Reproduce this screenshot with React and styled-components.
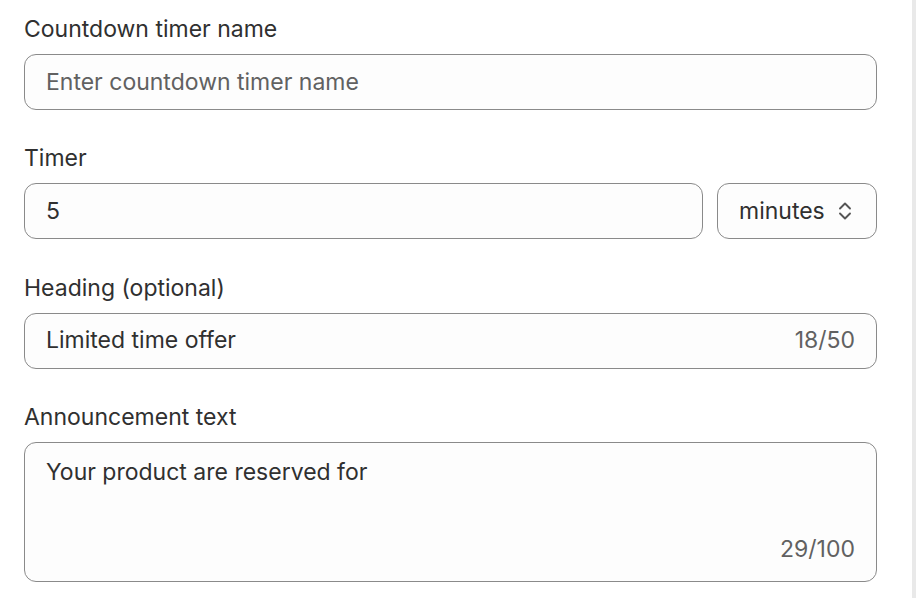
import React from 'react';
import styled, { createGlobalStyle } from 'styled-components';

const Global = createGlobalStyle`
  html, body {
    margin: 0;
    padding: 0;
    background: #ffffff;
  }
  body {
    font-family: Inter, "Noto Sans", sans-serif;
    color: #303030;
  }
`;

const Layout = styled.div`
  display: flex;
  height: 598px;
  overflow: hidden;
`;

const Panel = styled.div`
  flex: 1;
  display: flex;
  flex-direction: column;
  gap: 34.4px;
  padding: 15px 35px 0 24px;
`;

const Gutter = styled.div`
  width: 4px;
  background: #e9e9e9;
`;

const Field = styled.div`
  display: flex;
  flex-direction: column;
  gap: 10px;
  flex-shrink: 0;
`;

const Label = styled.label`
  font-size: 23px;
  line-height: 29px;
  color: #303030;
`;

const Row = styled.div`
  display: flex;
  gap: 14px;
`;

const Box = styled.div`
  flex: ${p => (p.$fixed ? '0 0 160px' : '1 0 auto')};
  box-sizing: border-box;
  height: ${p => p.$height || 56}px;
  border: 1px solid #8a8a8a;
  border-radius: 12px;
  background: #fdfdfd;
  padding: ${p => (p.$multiline ? '15px 21px 17px' : '0 21px')};
  display: flex;
  flex-direction: ${p => (p.$multiline ? 'column' : 'row')};
  align-items: ${p => (p.$multiline ? 'stretch' : 'center')};
  justify-content: space-between;
  font-size: 23px;
  line-height: 29px;
`;

const Value = styled.span`
  color: ${p => (p.$placeholder ? '#616161' : '#303030')};
  white-space: nowrap;
`;

const Counter = styled.span`
  color: #616161;
  text-align: right;
`;

const Chevrons = styled.svg`
  width: 20px;
  height: 22px;
  flex-shrink: 0;
`;

function SelectIcon() {
  return (
    <Chevrons viewBox="0 0 20 22" fill="none" stroke="#555555" strokeWidth="1.9" strokeLinecap="round" strokeLinejoin="round">
      <path d="M5 8.5 L10 3.5 L15 8.5" />
      <path d="M5 13.5 L10 18.5 L15 13.5" />
    </Chevrons>
  );
}

export default function App() {
  return (
    <Layout>
      <Global />
      <Panel>
        <Field>
          <Label>Countdown timer name</Label>
          <Box>
            <Value $placeholder>Enter countdown timer name</Value>
          </Box>
        </Field>
        <Field>
          <Label>Timer</Label>
          <Row>
            <Box>
              <Value>5</Value>
            </Box>
            <Box $fixed>
              <Value>minutes</Value>
              <SelectIcon />
            </Box>
          </Row>
        </Field>
        <Field>
          <Label>Heading (optional)</Label>
          <Box>
            <Value>Limited time offer</Value>
            <Counter>18/50</Counter>
          </Box>
        </Field>
        <Field>
          <Label>Announcement text</Label>
          <Box $multiline $height={140}>
            <Value>Your product are reserved for</Value>
            <Counter>29/100</Counter>
          </Box>
        </Field>
      </Panel>
      <Gutter />
    </Layout>
  );
}
